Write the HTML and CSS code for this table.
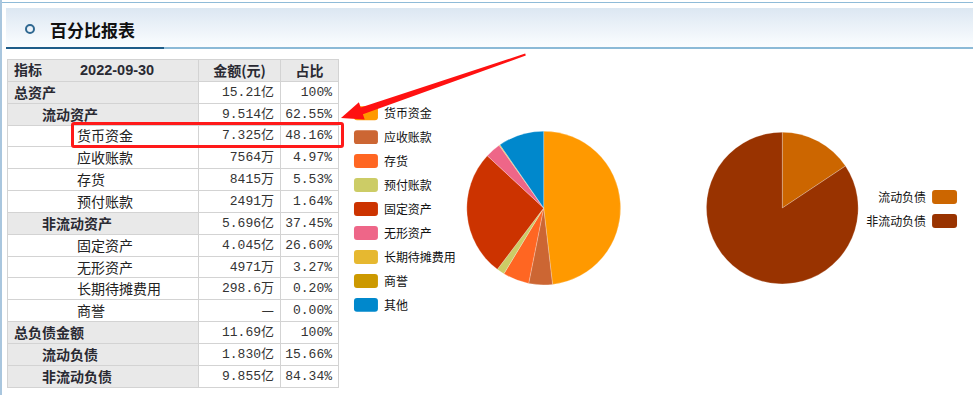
FILE: index.html
```html
<!DOCTYPE html>
<html lang="zh-CN">
<head>
<meta charset="utf-8">
<title>百分比报表</title>
<link rel="stylesheet" href="styles.css">
</head>
<body>
<div class="page">
  <div class="panel">
    <div class="panel-head">
      <span class="dot"></span>
      <h2 class="title">百分比报表</h2>
    </div>
    <div class="panel-body">
      <table class="ratio">
        <colgroup><col class="c1"><col class="c2"><col class="c3"></colgroup>
        <thead>
          <tr><th class="lbl"><span>指标</span><span class="date">2022-09-30</span></th><th class="ctr">金额(元)</th><th class="ctr">占比</th></tr>
        </thead>
        <tbody>
          <tr><td class="lbl l0">总资产</td><td class="num">15.21亿</td><td class="num">100%</td></tr>
          <tr><td class="lbl l1">流动资产</td><td class="num">9.514亿</td><td class="num">62.55%</td></tr>
          <tr><td class="sub">货币资金</td><td class="num">7.325亿</td><td class="num">48.16%</td></tr>
          <tr><td class="sub">应收账款</td><td class="num">7564万</td><td class="num">4.97%</td></tr>
          <tr><td class="sub">存货</td><td class="num">8415万</td><td class="num">5.53%</td></tr>
          <tr><td class="sub">预付账款</td><td class="num">2491万</td><td class="num">1.64%</td></tr>
          <tr><td class="lbl l1">非流动资产</td><td class="num">5.696亿</td><td class="num">37.45%</td></tr>
          <tr><td class="sub">固定资产</td><td class="num">4.045亿</td><td class="num">26.60%</td></tr>
          <tr><td class="sub">无形资产</td><td class="num">4971万</td><td class="num">3.27%</td></tr>
          <tr><td class="sub">长期待摊费用</td><td class="num">298.6万</td><td class="num">0.20%</td></tr>
          <tr><td class="sub">商誉</td><td class="num"><span class="dash">—</span></td><td class="num">0.00%</td></tr>
          <tr><td class="lbl l0">总负债金额</td><td class="num">11.69亿</td><td class="num">100%</td></tr>
          <tr><td class="lbl l1">流动负债</td><td class="num">1.830亿</td><td class="num">15.66%</td></tr>
          <tr><td class="lbl l1">非流动负债</td><td class="num">9.855亿</td><td class="num">84.34%</td></tr>
        </tbody>
      </table>
      <svg class="charts" width="633" height="346" viewBox="0 0 633 346">
        <g class="legend">
          <rect x="13" y="57" width="24" height="14" rx="3" fill="#ff9900"/><text x="43" y="69">货币资金</text>
          <rect x="13" y="81" width="24" height="14" rx="3" fill="#cc6633"/><text x="43" y="93">应收账款</text>
          <rect x="13" y="105" width="24" height="14" rx="3" fill="#ff6622"/><text x="43" y="117">存货</text>
          <rect x="13" y="129" width="24" height="14" rx="3" fill="#cccc66"/><text x="43" y="141">预付账款</text>
          <rect x="13" y="153" width="24" height="14" rx="3" fill="#cc3300"/><text x="43" y="165">固定资产</text>
          <rect x="13" y="177" width="24" height="14" rx="3" fill="#ee6688"/><text x="43" y="189">无形资产</text>
          <rect x="13" y="201" width="24" height="14" rx="3" fill="#e6b830"/><text x="43" y="213">长期待摊费用</text>
          <rect x="13" y="225" width="24" height="14" rx="3" fill="#cc9900"/><text x="43" y="237">商誉</text>
          <rect x="13" y="249" width="24" height="14" rx="3" fill="#0088cc"/><text x="43" y="261">其他</text>
        </g>
        <g class="pie">
          <path fill="#ff9900" d="M203,159 L203,82 A77,77 0 0 1 211.88,235.49 Z"/>
          <path fill="#cc6633" d="M203,159 L211.88,235.49 A77,77 0 0 1 187.95,234.52 Z"/>
          <path fill="#ff6622" d="M203,159 L187.95,234.52 A77,77 0 0 1 163.14,224.88 Z"/>
          <path fill="#cccc66" d="M203,159 L163.14,224.88 A77,77 0 0 1 156.58,220.43 Z"/>
          <path fill="#cc3300" d="M203,159 L156.58,220.43 A77,77 0 0 1 146.54,106.65 Z"/>
          <path fill="#ee6688" d="M203,159 L146.54,106.65 A77,77 0 0 1 158.41,96.23 Z"/>
          <path fill="#e6b830" d="M203,159 L158.41,96.23 A77,77 0 0 1 159.20,95.67 Z"/>
          <path fill="#0088cc" d="M203,159 L159.20,95.67 A77,77 0 0 1 203,82 Z"/>
        </g>
        <g class="pie">
          <path fill="#cc6600" d="M442,159 L442,83 A76,76 0 0 1 505.29,116.92 Z"/>
          <path fill="#993300" d="M442,159 L505.29,116.92 A76,76 0 1 1 442,83 Z"/>
        </g>
        <g class="legend">
          <text x="586" y="153" text-anchor="end">流动负债</text><rect x="592" y="141" width="25" height="14" rx="3" fill="#cc6600"/>
          <text x="586" y="177" text-anchor="end">非流动负债</text><rect x="592" y="165" width="25" height="14" rx="3" fill="#993300"/>
        </g>
      </svg>
    </div>
  </div>
  <div class="mark-box"></div>
  <svg class="mark-arrow" width="973" height="395" viewBox="0 0 973 395">
    <polygon fill="#ff1111" points="341,118 358.9,102.3 360.7,107.5 525.2,53.5 525.8,55.5 362.9,114.2 364.7,119.4"/>
  </svg>
</div>
</body>
</html>
```

FILE: styles.css
```css
* { box-sizing: border-box; }
html, body { margin: 0; padding: 0; background: #fff; }
body {
  width: 973px;
  height: 395px;
  overflow: hidden;
  font-family: "Noto Sans CJK SC", "Noto Sans", sans-serif;
  color: #222;
}
.page {
  position: relative;
  height: 395px;
  border-left: 2px solid #a9c6de;
  padding-top: 2px;
}
.panel {
  border-top: 1px solid #8fbbd8;
  padding: 5px 0 0 4px;
}
.panel-head {
  position: relative;
  height: 41px;
  display: flex;
  align-items: center;
  padding: 3px 0 0 19px;
  background: linear-gradient(#dce7f2, #fbfdff);
  border-bottom: 2px solid #8cbad7;
}
.panel-head::after {
  content: "";
  position: absolute;
  left: 0;
  bottom: -2px;
  width: 158px;
  height: 2px;
  background: #1f5d89;
}
.dot {
  width: 10px;
  height: 10px;
  border: 2px solid #2f6891;
  border-radius: 50%;
  margin-right: 15px;
}
.title {
  margin: 0;
  font-size: 17px;
  font-weight: bold;
  color: #111;
  letter-spacing: 0;
}
.panel-body {
  display: flex;
  align-items: flex-start;
}
.ratio {
  margin: 10px 0 0 1px;
  border-collapse: collapse;
  table-layout: fixed;
  width: 331px;
  font-size: 14px;
}
.c1 { width: 191px; }
.c2 { width: 82px; }
.c3 { width: 58px; }
.ratio th, .ratio td {
  border: 1px solid #d3d3d3;
  height: 21.85px;
  padding: 0;
  line-height: 19px;
  white-space: nowrap;
  overflow: hidden;
}
.ratio th {
  background: #e9e9e9;
  font-weight: bold;
  color: #2a2a33;
}
.ratio th.lbl { text-align: left; padding-left: 6px; }
.ratio th .date { margin-left: 38px; font-family: "Liberation Sans", sans-serif; font-size: 14.5px; }
.ratio th.ctr { text-align: center; }
.ratio td.lbl {
  background: #e9e9e9;
  font-weight: bold;
  color: #2a2a33;
}
.ratio td.l0 { padding-left: 6px; }
.ratio td.l1 { padding-left: 34px; }
.ratio td.sub { padding-left: 69px; color: #222; }
.ratio td.num {
  text-align: right;
  padding-right: 6px;
  font-family: "Liberation Mono", "Noto Sans CJK SC", monospace;
  font-size: 13px;
  color: #333;
}
.dash { font-family: "Noto Sans CJK SC", sans-serif; font-size: 14px; }
.charts {
  display: block;
  margin-left: 2px;
}
.legend text {
  font-family: "Noto Sans CJK SC", sans-serif;
  font-size: 12px;
  fill: #111;
}
.pie path { stroke: #fff; stroke-width: 0.4; stroke-opacity: 0.6; }
.mark-box {
  position: absolute;
  left: 69px;
  top: 122px;
  width: 273px;
  height: 26px;
  border: 3px solid #ff1a1a;
  border-radius: 3px;
}
.mark-arrow {
  position: absolute;
  left: -2px;
  top: 0;
  pointer-events: none;
}
```
